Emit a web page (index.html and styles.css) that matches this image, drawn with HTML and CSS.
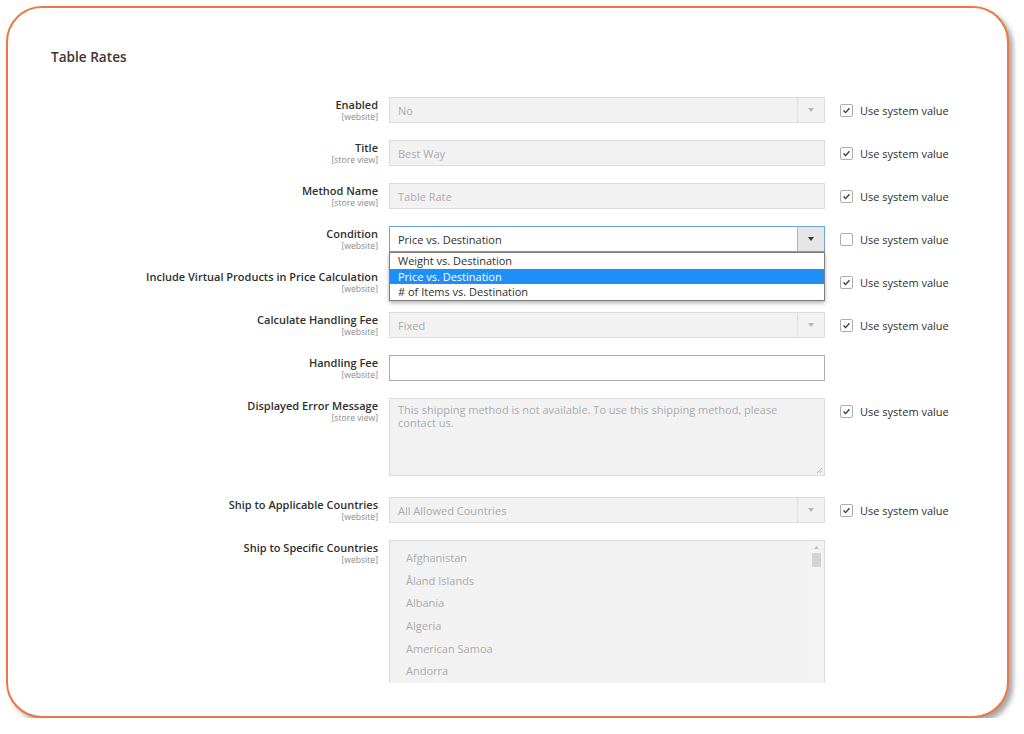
FILE: index.html
```html
<!DOCTYPE html>
<html lang="en">
<head>
<meta charset="utf-8">
<title>Table Rates</title>
<link rel="stylesheet" href="styles.css">
</head>
<body>
<div class="frame">
  <div class="card">
    <h2 class="title">Table Rates</h2>
    <div class="form">
      <div class="row">
        <div class="label"><span class="name">Enabled</span><span class="scope">[website]</span></div>
        <div class="field select disabled"><span class="val">No</span><span class="arrow"></span></div>
        <label class="use"><span class="cb checked"><svg viewBox="0 0 13 13"><path d="M3 6.6 L5.4 9 L10 3.8"/></svg></span>Use system value</label>
      </div>
      <div class="row">
        <div class="label"><span class="name">Title</span><span class="scope">[store view]</span></div>
        <div class="field disabled"><span class="val">Best Way</span></div>
        <label class="use"><span class="cb checked"><svg viewBox="0 0 13 13"><path d="M3 6.6 L5.4 9 L10 3.8"/></svg></span>Use system value</label>
      </div>
      <div class="row">
        <div class="label"><span class="name">Method Name</span><span class="scope">[store view]</span></div>
        <div class="field disabled"><span class="val">Table Rate</span></div>
        <label class="use"><span class="cb checked"><svg viewBox="0 0 13 13"><path d="M3 6.6 L5.4 9 L10 3.8"/></svg></span>Use system value</label>
      </div>
      <div class="row">
        <div class="label"><span class="name">Condition</span><span class="scope">[website]</span></div>
        <div class="field select active"><span class="val">Price vs. Destination</span><span class="arrow"></span>
          <ul class="dropdown">
            <li>Weight vs. Destination</li>
            <li class="sel">Price vs. Destination</li>
            <li># of Items vs. Destination</li>
          </ul>
        </div>
        <label class="use"><span class="cb"></span>Use system value</label>
      </div>
      <div class="row">
        <div class="label"><span class="name">Include Virtual Products in Price Calculation</span><span class="scope">[website]</span></div>
        <div class="field select disabled"><span class="arrow"></span></div>
        <label class="use"><span class="cb checked"><svg viewBox="0 0 13 13"><path d="M3 6.6 L5.4 9 L10 3.8"/></svg></span>Use system value</label>
      </div>
      <div class="row">
        <div class="label"><span class="name">Calculate Handling Fee</span><span class="scope">[website]</span></div>
        <div class="field select disabled"><span class="val">Fixed</span><span class="arrow"></span></div>
        <label class="use"><span class="cb checked"><svg viewBox="0 0 13 13"><path d="M3 6.6 L5.4 9 L10 3.8"/></svg></span>Use system value</label>
      </div>
      <div class="row">
        <div class="label"><span class="name">Handling Fee</span><span class="scope">[website]</span></div>
        <div class="field empty"></div>
      </div>
      <div class="row row-area">
        <div class="label"><span class="name">Displayed Error Message</span><span class="scope">[store view]</span></div>
        <div class="field area disabled"><span class="val">This shipping method is not available. To use this shipping method, please contact us.</span>
          <svg class="grip" viewBox="0 0 8 8"><path d="M7 1 L1 7 M7 4 L4 7"/></svg>
        </div>
        <label class="use"><span class="cb checked"><svg viewBox="0 0 13 13"><path d="M3 6.6 L5.4 9 L10 3.8"/></svg></span>Use system value</label>
      </div>
      <div class="row">
        <div class="label"><span class="name">Ship to Applicable Countries</span><span class="scope">[website]</span></div>
        <div class="field select disabled"><span class="val">All Allowed Countries</span><span class="arrow"></span></div>
        <label class="use"><span class="cb checked"><svg viewBox="0 0 13 13"><path d="M3 6.6 L5.4 9 L10 3.8"/></svg></span>Use system value</label>
      </div>
      <div class="row">
        <div class="label"><span class="name">Ship to Specific Countries</span><span class="scope">[website]</span></div>
        <div class="field multi disabled">
          <ul class="opts">
            <li>Afghanistan</li>
            <li>Åland Islands</li>
            <li>Albania</li>
            <li>Algeria</li>
            <li>American Samoa</li>
            <li>Andorra</li>
          </ul>
          <div class="scrollbar"><svg class="up" viewBox="0 0 7 4"><path d="M0 4 L3.5 0 L7 4 Z"/></svg><span class="thumb"></span></div>
        </div>
      </div>
    </div>
  </div>
</div>
</body>
</html>
```

FILE: styles.css
```css
* { box-sizing: border-box; }
html, body { margin: 0; padding: 0; background: #fff; }
body {
  font-family: "Open Sans", "Noto Sans", "Liberation Sans", sans-serif;
  color: #303030;
}
.frame { padding: 6px 0 0 6px; }
.card {
  width: 1003px;
  height: 712px;
  border: 2px solid #ee7743;
  border-radius: 36px;
  background: #fff;
  box-shadow: 4px 4px 5px rgba(0, 0, 0, 0.35);
  padding: 41px 0 0 43px;
}
.title {
  margin: 0;
  font-size: 13.6px;
  line-height: 16px;
  font-weight: 600;
  color: #41362f;
}
.form {
  margin-top: 32px;
  margin-left: 49px;
  height: 586px;
  overflow: hidden;
}
.row {
  display: flex;
  align-items: flex-start;
  margin-bottom: 17px;
}
.row-area { margin-bottom: 21px; }
.label {
  width: 278px;
  height: 26px;
  flex: none;
  margin-right: 11px;
  text-align: right;
  padding-top: 1px;
  display: flex;
  flex-direction: column;
}
.name {
  font-size: 11px;
  line-height: 14px;
  font-weight: 600;
  color: #303030;
}
.scope {
  font-size: 8.6px;
  line-height: 10px;
  color: #8a8a8a;
}
.field {
  position: relative;
  width: 436px;
  height: 26px;
  flex: none;
  border: 1px solid #adadad;
  background: #fff;
  font-size: 11px;
  line-height: 25px;
  padding: 0 8px;
  color: #303030;
}
.field.disabled {
  background: #f2f2f2;
  border-color: #dcdcdc;
  color: #acacac;
}
.field.select .arrow {
  position: absolute;
  top: 0;
  right: 0;
  width: 27px;
  height: 100%;
  border-left: 1px solid #dcdcdc;
}
.field.select .arrow::after {
  content: "";
  position: absolute;
  left: 10px;
  top: 10px;
  border-left: 3.5px solid transparent;
  border-right: 3.5px solid transparent;
  border-top: 4px solid #b8b8b8;
}
.field.active {
  border-color: #6aa6e4;
}
.field.active .arrow {
  background: #e6e6e6;
  border-left-color: #b5b5b5;
}
.field.active .arrow::after { border-top-color: #41362f; }
.dropdown {
  position: absolute;
  left: -1px;
  right: -1px;
  top: 25px;
  margin: 0;
  padding: 0;
  list-style: none;
  background: #fff;
  border: 1px solid #7d7d7d;
  box-shadow: 0 2px 4px rgba(0, 0, 0, 0.3);
  z-index: 5;
}
.dropdown li {
  height: 15.6px;
  line-height: 16.6px;
  padding-left: 8px;
  color: #303030;
}
.dropdown li.sel {
  background: #1e8ff7;
  color: #fff;
}
.use {
  display: flex;
  align-items: center;
  margin-left: 15px;
  height: 26px;
  padding-top: 1px;
  font-size: 11px;
  color: #303030;
  white-space: nowrap;
}
.cb {
  width: 13px;
  height: 13px;
  border: 1px solid #adadad;
  border-radius: 2px;
  background: #fff;
  margin-right: 7px;
  flex: none;
  display: flex;
}
.cb svg { width: 11px; height: 11px; }
.cb path {
  fill: none;
  stroke: #41362f;
  stroke-width: 1.6;
}
.field.area {
  height: 78px;
  line-height: 13px;
  padding: 4px 8px;
}
.field.area .val { display: block; }
.grip {
  position: absolute;
  right: 1px;
  bottom: 1px;
  width: 7px;
  height: 7px;
}
.grip path { stroke: #9c9c9c; stroke-width: 0.8; fill: none; }
.field.multi {
  height: 150px;
  padding: 6px 0 0 0;
}
.opts {
  margin: 0;
  padding: 0 0 0 16px;
  list-style: none;
}
.opts li {
  height: 22.7px;
  line-height: 22.7px;
  color: #acacac;
}
.scrollbar {
  position: absolute;
  top: 0;
  right: 1px;
  width: 13px;
  height: 100%;
  background: #f3f3f3;
}
.scrollbar .up {
  position: absolute;
  left: 4px;
  top: 5px;
  width: 5px;
  height: 3px;
}
.scrollbar .up path { fill: #bdbdbd; }
.scrollbar .thumb {
  position: absolute;
  left: 2px;
  top: 12px;
  width: 9px;
  height: 14px;
  background: #d2d2d2;
}
```
